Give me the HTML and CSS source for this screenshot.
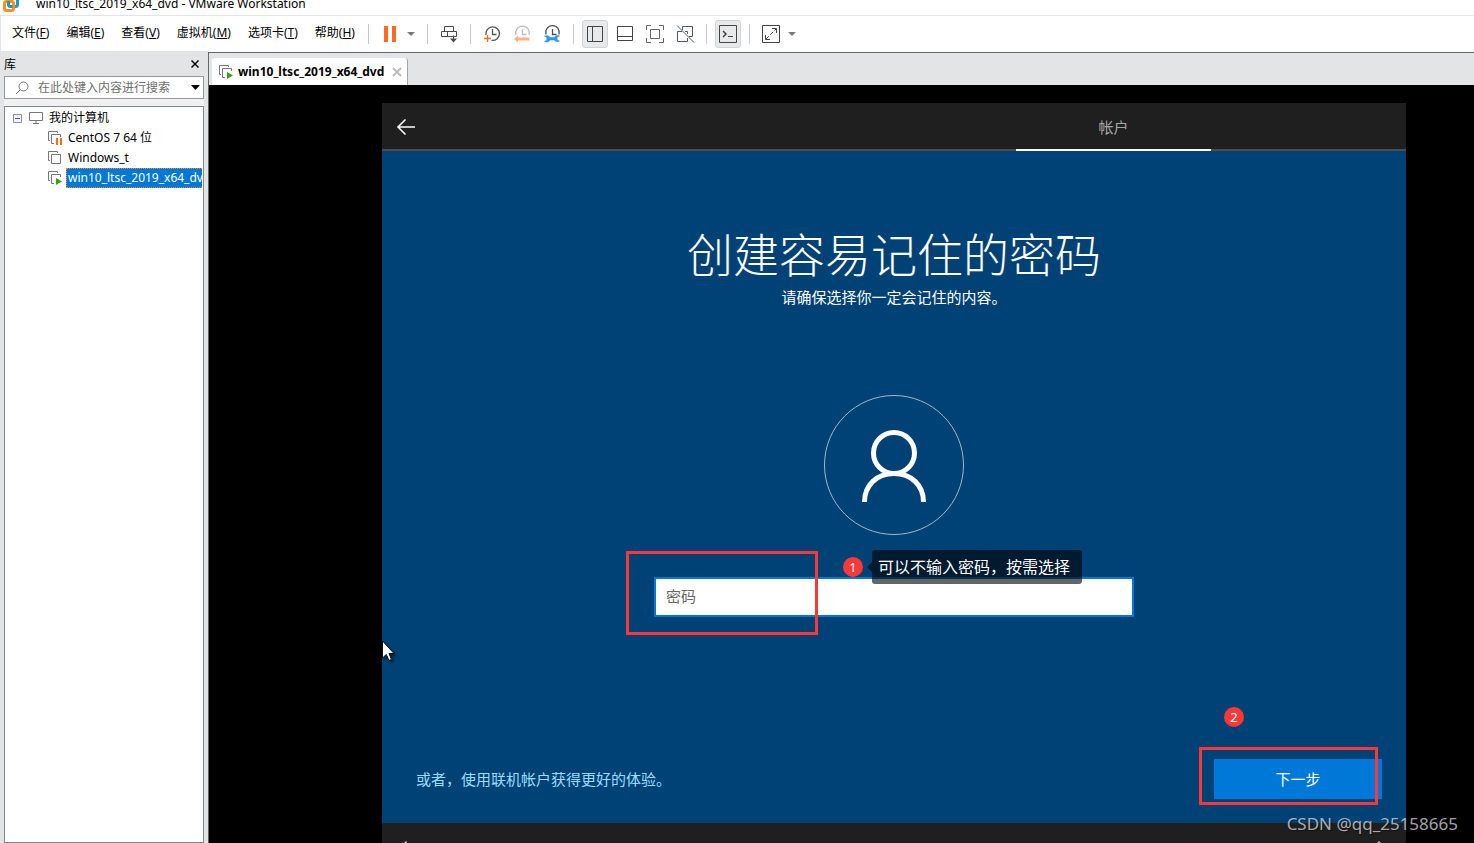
FILE: index.html
```html
<!DOCTYPE html>
<html lang="zh-CN">
<head>
<meta charset="utf-8">
<meta name="viewport" content="width=device-width, initial-scale=1">
<title>win10_ltsc_2019_x64_dvd - VMware Workstation</title>
<link rel="stylesheet" href="styles.css">
</head>
<body>
<header class="titlebar">
  <div class="titlebar-inner">
    <svg class="app-logo" width="16" height="16" viewBox="0 0 16 16" fill="none" stroke-width="3">
      <path d="M5.500 5V3.500a2 2 0 0 1 2-2h5a2 2 0 0 1 2 2v5a2 2 0 0 1-2 2H11" stroke="#1b9ad2"/>
      <path d="M10.500 5.500h-7a2 2 0 0 0-2 2v5a2 2 0 0 0 2 2h5a2 2 0 0 0 2-2V5.500" stroke="#f7931e"/>
      <path d="M5.500 5v3.500a2 2 0 0 0 2 2h2" stroke="#1b9ad2"/>
    </svg>
    <span class="title-text">win10_ltsc_2019_x64_dvd - VMware Workstation</span>
  </div>
</header>

<div class="menubar">
  <nav class="menus">
    <button class="menu">文件(<u>F</u>)</button>
    <button class="menu">编辑(<u>E</u>)</button>
    <button class="menu">查看(<u>V</u>)</button>
    <button class="menu">虚拟机(<u>M</u>)</button>
    <button class="menu">选项卡(<u>T</u>)</button>
    <button class="menu">帮助(<u>H</u>)</button>
  </nav>
  <span class="sep"></span>
  <div class="tools tools-joined">
    <button class="tool" aria-label="暂停"><svg width="20" height="20" viewBox="0 0 20 20"><path d="M4 2h4v16H4zM12 2h4v16h-4z" fill="#ff6a1f"/></svg></button>
    <button class="drop" aria-label="电源选项"><svg width="8" height="4" viewBox="0 0 8 4"><path d="M0 0h8L4 4z" fill="#7a7a7a"/></svg></button>
  </div>
  <span class="sep"></span>
  <div class="tools">
    <button class="tool" aria-label="发送按键"><svg width="20" height="20" viewBox="0 0 20 20" fill="none" stroke="#4a4a4a"><path d="M5.500 7.500v-5h9v5M2.500 7.500h15v5h-15zM8.500 7.500v5M14.500 11.500v5"/><path d="M11 14.500h7l-3.500 4z" fill="#4a4a4a" stroke="none"/></svg></button>
  </div>
  <span class="sep"></span>
  <div class="tools">
    <button class="tool" aria-label="拍摄快照"><svg width="20" height="20" viewBox="0 0 20 20" fill="none"><path d="M4 11A6.800 6.800 0 1 1 9.500 16.300M10.500 5v5.500h4" stroke="#555" stroke-width="1.300"/><path d="M5.500 11v7M2 14.500h7" stroke="#ff6a1f" stroke-width="1.300"/></svg></button>
    <button class="tool" aria-label="恢复快照"><svg width="20" height="20" viewBox="0 0 20 20" fill="none"><path d="M4 11a6.800 6.800 0 1 1 13 0M10.500 5v5.500h4" stroke="#bdbdbd" stroke-width="1.300"/><path d="M2 15l4-3.500v2h11.500v3H6v2z" fill="#ffb088"/></svg></button>
    <button class="tool" aria-label="管理快照"><svg width="20" height="20" viewBox="0 0 20 20" fill="none"><path d="M4 10.500a6.800 6.800 0 1 1 13 0M10.500 5v5.500h4" stroke="#4f4f4f" stroke-width="1.300"/><path d="M2.500 12.200c2.500-1 4.500-.5 5.300 1.200h4.700c.8-1.700 3-2.500 5-1.400l-2.500 1.300v2.400l2.500 1.300c-2 1.200-4.200.6-5-1H7.800c-.8 2-3 2.600-5.300 1.600l2.300-1.400v-2.600z" fill="#2b9be0" stroke="#2b9be0" stroke-width=".6"/></svg></button>
  </div>
  <span class="sep"></span>
  <div class="tools">
    <button class="tool pressed" aria-label="显示库"><svg width="20" height="20" viewBox="0 0 20 20" fill="none" stroke="#444"><path d="M2.500 2.500h15v15h-15zM7.500 2.500v15"/></svg></button>
    <button class="tool" aria-label="缩略图栏"><svg width="20" height="20" viewBox="0 0 20 20" fill="none" stroke="#444"><path d="M2.500 2.500h15v14h-15zM2.500 12.500h15"/></svg></button>
    <button class="tool" aria-label="全屏"><svg width="20" height="20" viewBox="0 0 20 20" fill="none" stroke="#666"><path d="M5.500 5.500h9v9h-9zM1.500 6V1.500H6M14 1.500h4.500V6M18.500 14v4.500H14M6 18.500H1.500V14"/></svg></button>
    <button class="tool" aria-label="Unity"><svg width="20" height="20" viewBox="0 0 20 20" fill="none" stroke="#4d5a66"><path d="M7 7.500H2.500v10h10V14M7.500 6V2.500h10v10H14M2 1.500l17 17M10 7.500h2.500V10"/></svg></button>
  </div>
  <span class="sep"></span>
  <div class="tools">
    <button class="tool pressed" aria-label="控制台视图"><svg width="20" height="20" viewBox="0 0 20 20" fill="none" stroke="#444"><path d="M1.500 1.500h17v17h-17z"/><path d="M5 7l3 3-3 3" stroke-width="1.500"/><path d="M10 12.500h5"/></svg></button>
  </div>
  <span class="sep"></span>
  <div class="tools tools-joined">
    <button class="tool" aria-label="拉伸"><svg width="20" height="20" viewBox="0 0 20 20" fill="none" stroke="#444"><path d="M1.500 1.500h17v17h-17zM11 4.500h4.500V9M4.500 11v4.500H9"/><path d="M5 15L15 5" stroke-dasharray="4 2"/></svg></button>
    <button class="drop" aria-label="拉伸选项"><svg width="8" height="4" viewBox="0 0 8 4"><path d="M0 0h8L4 4z" fill="#7a7a7a"/></svg></button>
  </div>
</div>

<div class="body">
  <aside class="sidebar">
    <div class="side-head">
      <span>库</span>
      <button class="side-close" aria-label="关闭"><svg width="8" height="8" viewBox="0 0 8 8" stroke="#000" stroke-width="1.500"><path d="M.5.5l7 7M7.500.5l-7 7"/></svg></button>
    </div>
    <div class="side-body">
      <div class="search">
        <svg width="14" height="14" viewBox="0 0 14 14" fill="none" stroke="#777"><circle cx="8.500" cy="5.500" r="4.500"/><path d="M5.500 8.500L1 13"/></svg>
        <input class="search-input" type="text" aria-label="搜索" placeholder="在此处键入内容进行搜索">
        <button class="search-drop" aria-label="搜索选项"><svg width="9" height="5" viewBox="0 0 9 5"><path d="M0 0h9L4.500 5z"/></svg></button>
      </div>
      <ul class="tree">
        <li class="node root">
          <svg width="9" height="9" viewBox="0 0 9 9" fill="#f4f4f4" stroke="#919191"><path d="M.5.5h8v8h-8z"/><path d="M2 4.500h5" stroke="#3a56a5"/></svg>
          <svg class="pc" width="14" height="12" viewBox="0 0 14 12" fill="none" stroke="#777"><path d="M.5.5h13v8H.500zM7 8.500v3M4 11.500h6"/></svg>
          <span class="label">我的计算机</span>
        </li>
        <li class="node child">
          <svg width="16" height="16" viewBox="0 0 16 16" fill="none" stroke="#777"><path d="M3 10.500H1.500v-9h9V3M7 13.500H4.500v-9h9V7"/><path d="M9 8h2v7H9zM13 8h2v7h-2z" fill="#ff6a1f" stroke="none"/></svg>
          <span class="label">CentOS 7 64 位</span>
        </li>
        <li class="node child">
          <svg width="16" height="16" viewBox="0 0 16 16" fill="none" stroke="#777"><path d="M3 10.500H1.500v-9h9V3M4.500 4.500h9v9h-9z"/></svg>
          <span class="label">Windows_t</span>
        </li>
        <li class="node child">
          <svg width="16" height="16" viewBox="0 0 16 16" fill="none" stroke="#777"><path d="M3 10.500H1.500v-9h9V3M7 13.500H4.500v-9h9V7"/><path d="M9 8l6 3.500L9 15z" fill="#3f9c14" stroke="none"/></svg>
          <span class="label selected">win10_ltsc_2019_x64_dvd</span>
        </li>
      </ul>
    </div>
  </aside>

  <main class="workspace">
    <div class="tabs">
      <div class="tab">
        <svg width="16" height="16" viewBox="0 0 16 16" fill="none" stroke="#777"><path d="M3 10.500H1.500v-9h9V3M7 13.500H4.500v-9h9V7"/><path d="M9 8l6 3.500L9 15z" fill="#3f9c14" stroke="none"/></svg>
        <span class="tab-name">win10_ltsc_2019_x64_dvd</span>
        <button class="tab-close" aria-label="关闭选项卡"><svg width="10" height="10" viewBox="0 0 10 10" stroke="#bcbcbc" stroke-width="2"><path d="M1 1l8 8M9 1L1 9"/></svg></button>
      </div>
    </div>
    <div class="screen">
      <div class="guest">
        <div class="oobe-head">
          <button class="back" aria-label="返回"><svg width="20" height="18" viewBox="0 0 20 18" fill="none" stroke="#fff" stroke-width="1.600"><path d="M19 9H2M9.500 1.500L2 9l7.500 7.500"/></svg></button>
          <div class="step">帐户</div>
        </div>
        <section class="oobe">
          <h1 class="heading">创建容易记住的密码</h1>
          <p class="sub">请确保选择你一定会记住的内容。</p>
          <div class="avatar">
            <svg width="64" height="72" viewBox="0 0 64 72" fill="none" stroke="#fff" stroke-width="5"><circle cx="32" cy="23" r="20.500"/><path d="M2.500 72C2.500 55 15 43.500 32 43.500S61.500 55 61.500 72"/></svg>
          </div>
          <div class="field">
            <input class="password" type="password" aria-label="密码" placeholder="密码">
            <span class="mark mark-field"></span>
            <span class="badge badge-one">1</span>
            <span class="note">可以不输入密码，按需选择</span>
          </div>
          <div class="oobe-foot">
            <a class="online" href="#">或者，使用联机帐户获得更好的体验。</a>
            <div class="next-wrap">
              <button class="next">下一步</button>
              <span class="mark mark-next"></span>
              <span class="badge badge-two">2</span>
            </div>
          </div>
        </section>
        <div class="oobe-bar">
          <svg width="20" height="20" viewBox="0 0 20 20" fill="none" stroke="#fff"><path d="M2 3l2-1M5 3l2-2.500V6M2 8h7v8H2z"/></svg>
          <svg width="20" height="20" viewBox="0 0 20 20" fill="none" stroke="#fff"><path d="M10 .5L3 8v9h14V8z"/></svg>
        </div>
        <svg class="cursor" width="16" height="22" viewBox="0 0 16 22"><path d="M.5 1v17l3.800-3.500L7 20.500l2.500-1-2.500-6h5z" fill="#fff" stroke="#111"/></svg>
      </div>
    </div>
  </main>
</div>
<div class="watermark">CSDN @qq_25158665</div>
</body>
</html>
```

FILE: styles.css
```css
* { box-sizing: border-box; }

body {
  margin: 0;
  height: 100vh;
  display: flex;
  flex-direction: column;
  overflow: hidden;
  position: relative;
  background: #fff;
  color: #000;
  font-family: "Noto Sans", "Noto Sans CJK SC", sans-serif;
  font-size: 12px;
}

button, input { font: inherit; color: inherit; }
button { padding: 0; border: 0; background: none; }
svg { display: block; flex: none; }

/* Title bar */
.titlebar {
  flex: none;
  height: 16px;
  display: flex;
  align-items: flex-end;
  overflow: hidden;
  border-bottom: 1px solid #e3e4e6;
}
.titlebar-inner {
  flex: none;
  height: 22px;
  display: flex;
  align-items: center;
  gap: 17px;
  padding-left: 3px;
}
.title-text { line-height: 22px; white-space: nowrap; }

/* Menu and toolbar */
.menubar {
  flex: none;
  height: 35px;
  display: flex;
  align-items: center;
  border-left: 1px solid #e3e4e6;
}
.menus { display: flex; gap: 1px; padding: 0 5px 2px 3px; }
.menu { padding: 0 8px; line-height: 20px; white-space: nowrap; }
.sep { flex: none; width: 1px; height: 20px; margin: 0 8px; background: #c8c8c8; }
.menus + .sep { margin-left: 0; }
.tools { display: flex; align-items: center; gap: 4px; }
.tools-joined { gap: 0; }
.tool {
  width: 26px;
  height: 28px;
  display: flex;
  align-items: center;
  justify-content: center;
  border-radius: 3px;
}
.pressed { background: #e8e9ea; border: 1px solid #d2d3d4; }
.drop { width: 16px; height: 28px; display: flex; align-items: center; justify-content: center; }

/* Library */
.body { flex: 1; display: flex; min-height: 0; }
.sidebar {
  flex: none;
  width: 208px;
  display: flex;
  flex-direction: column;
  background: #e3e4e6;
}
.side-head {
  height: 25px;
  display: flex;
  align-items: center;
  justify-content: space-between;
  padding: 0 9px 0 4px;
}
.side-body {
  flex: 1;
  display: flex;
  flex-direction: column;
  margin: 0 4px;
  gap: 7px;
  background: #f0f0f0;
}
.search {
  height: 23px;
  display: flex;
  align-items: center;
  padding: 0 3px 0 10px;
  gap: 9px;
  background: #fff;
  border: 1px solid #999;
}
.search-input {
  flex: 1;
  min-width: 0;
  padding: 0;
  border: 0;
  outline: 0;
  background: none;
}
.search-input::placeholder { color: #6d6d6d; }
.tree {
  flex: 1;
  margin: 0;
  padding: 1px;
  list-style: none;
  overflow: hidden;
  background: #fff;
  border: 1px solid #828790;
}
.node { display: flex; align-items: center; height: 20px; line-height: 18px; white-space: nowrap; overflow: hidden; }
.root { padding-left: 7px; gap: 5px; }
.pc { margin-left: 2px; }
.root .label { padding: 0; }
.child { padding-left: 41px; gap: 3px; }
.label { padding: 0 1px; border: 1px solid transparent; }
.selected { background: #0078d7; color: #fff; border: 1px dotted #ff8728; }

/* Workspace */
.workspace {
  flex: 1;
  min-width: 0;
  display: flex;
  flex-direction: column;
  margin-top: 1px;
  border: solid #666;
  border-width: 1px 0 0 1px;
}
.tabs { flex: none; height: 32px; display: flex; align-items: flex-end; padding-left: 3px; background: #e3e4e6; }
.tab {
  height: 27px;
  display: flex;
  align-items: center;
  gap: 4px;
  padding: 0 5px 0 6px;
  background: #fff;
  border-right: 1px solid #a5a5a5;
  border-radius: 3px 3px 0 0;
}
.tab-name { font-weight: 700; }
.tab-close { margin-left: 4px; }
.screen { flex: 1; min-height: 0; padding: 18px 68px 0 173px; overflow: hidden; background: #000; }
.guest { position: relative; }

.oobe-head {
  height: 48px;
  display: flex;
  justify-content: space-between;
  padding: 0 195px 0 14px;
  background: #1f1f1f;
  box-shadow: inset 0 -2px #4c4c4c;
}
.step {
  width: 195px;
  text-align: center;
  font-size: 15px;
  line-height: 48px;
  color: #a6a6a6;
  border-bottom: 2px solid #fff;
}

.oobe {
  display: flex;
  flex-direction: column;
  align-items: center;
  padding: 73px 24px 24px 34px;
  background: #004275;
  color: #fff;
  font-size: 15px;
}
.heading { margin: 0; font-size: 46px; font-weight: 300; line-height: 60px; }
.sub { margin: 0; line-height: 26px; }
.avatar {
  width: 140px;
  height: 140px;
  margin-top: 85px;
  padding-top: 2px;
  display: flex;
  align-items: center;
  justify-content: center;
  border: 1px solid #9fb9cd;
  border-radius: 50%;
}
.field { position: relative; width: 480px; margin-top: 42px; }
.heading, .sub, .avatar, .field { margin-right: 10px; }
.password {
  display: block;
  width: 100%;
  height: 40px;
  padding: 0 10px 2px;
  border: 2px solid #0078d7;
  background: #fff;
  color: #000;
  outline: 0;
}
.password::placeholder { color: #666; }

/* Annotations over the guest screen */
.mark { position: absolute; border: 3px solid #fb3838; pointer-events: none; }
.mark-field { left: -28px; top: -26px; width: 192px; height: 84px; }
.mark-next { left: -15px; top: -12px; width: 179px; height: 58px; }
.badge {
  position: absolute;
  width: 20px;
  height: 20px;
  border-radius: 50%;
  background: #fb3838;
  font-size: 13px;
  line-height: 20px;
  text-align: center;
}
.badge-one { left: 189px; top: -20px; }
.badge-two { left: 10px; top: -52px; }
.note {
  position: absolute;
  left: 218px;
  top: -27px;
  width: 210px;
  padding: 0 6px;
  font-size: 16px;
  line-height: 34px;
  white-space: nowrap;
  background: rgba(0, 0, 0, 0.6);
  border-radius: 3px;
}
.note::before {
  content: "";
  position: absolute;
  right: 100%;
  top: 12px;
  border: 5px solid transparent;
  border-left: 0;
  border-right-color: rgba(0, 0, 0, 0.6);
}

.oobe-foot {
  align-self: stretch;
  display: flex;
  align-items: center;
  justify-content: space-between;
  margin-top: 142px;
}
.online { padding-bottom: 2px; color: #9cdcff; text-decoration: none; }
.next-wrap { position: relative; }
.next { display: block; width: 168px; height: 40px; padding-bottom: 2px; background: #0078d7; color: #fff; }

.oobe-bar {
  height: 48px;
  display: flex;
  align-items: center;
  justify-content: space-between;
  padding: 8px 17px 0;
  background: #1f1f1f;
}
.cursor { position: absolute; left: 0; top: 537px; filter: drop-shadow(2px 2px 1px rgba(0, 0, 0, 0.5)); }

.watermark {
  position: absolute;
  right: 16px;
  bottom: 7px;
  font-size: 17px;
  line-height: 24px;
  color: rgba(255, 255, 255, 0.65);
  text-shadow: 1px 1px 1px rgba(0, 0, 0, 0.5);
}
```
